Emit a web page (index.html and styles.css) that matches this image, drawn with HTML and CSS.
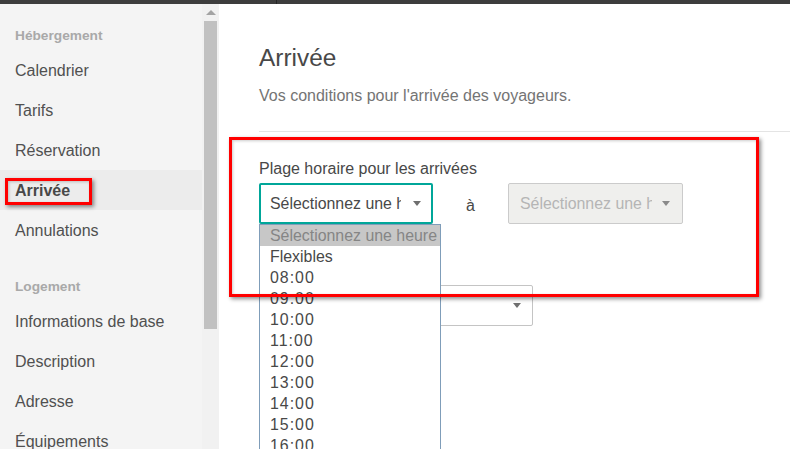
FILE: index.html
```html
<!DOCTYPE html>
<html lang="fr">
<head>
<meta charset="utf-8">
<title>Arrivée</title>
<link rel="stylesheet" href="styles.css">
</head>
<body>
<div class="topbar"><span class="topbar-divider"></span></div>
<div class="app">
  <aside class="sidebar">
    <nav class="nav">
      <div class="nav-head">Hébergement</div>
      <a class="nav-item">Calendrier</a>
      <a class="nav-item">Tarifs</a>
      <a class="nav-item">Réservation</a>
      <a class="nav-item active">Arrivée</a>
      <a class="nav-item">Annulations</a>
      <div class="nav-head second">Logement</div>
      <a class="nav-item">Informations de base</a>
      <a class="nav-item">Description</a>
      <a class="nav-item">Adresse</a>
      <a class="nav-item">Équipements</a>
    </nav>
    <div class="scrollbar">
      <div class="scroll-btn"><span class="scroll-arrow"></span></div>
      <div class="scroll-thumb"></div>
    </div>
  </aside>
  <main class="main">
    <h1 class="title">Arrivée</h1>
    <p class="subtitle">Vos conditions pour l'arrivée des voyageurs.</p>
    <hr class="rule">
    <section class="form">
      <div class="field-label">Plage horaire pour les arrivées</div>
      <div class="range">
        <div class="select focused">
          <span class="select-text">Sélectionnez une heure</span>
          <span class="caret"></span>
          <ul class="listbox">
            <li class="opt selected">Sélectionnez une heure</li>
            <li class="opt">Flexibles</li>
            <li class="opt time">08:00</li>
            <li class="opt time">09:00</li>
            <li class="opt time">10:00</li>
            <li class="opt time">11:00</li>
            <li class="opt time">12:00</li>
            <li class="opt time">13:00</li>
            <li class="opt time">14:00</li>
            <li class="opt time">15:00</li>
            <li class="opt time">16:00</li>
          </ul>
        </div>
        <span class="to">à</span>
        <div class="select disabled">
          <span class="select-text">Sélectionnez une heure</span>
          <span class="caret"></span>
        </div>
      </div>
      <div class="select wide">
        <span class="caret"></span>
      </div>
    </section>
  </main>
  <div class="annot annot-nav"></div>
  <div class="annot annot-form"></div>
</div>
</body>
</html>
```
FILE: styles.css
```css
* { box-sizing: border-box; }
html, body {
  margin: 0;
  padding: 0;
  height: 449px;
  overflow: hidden;
  background: #fff;
  font-family: "Liberation Sans", Arial, sans-serif;
  color: #484848;
}
.topbar {
  height: 4px;
  background: #3d3d3d;
}
.topbar-divider {
  display: block;
  margin-left: 276px;
  width: 1px;
  height: 4px;
  background: #262626;
}
.app {
  display: flex;
  height: 445px;
}
.sidebar {
  display: flex;
  flex: 0 0 219px;
}
.nav {
  width: 202px;
  background: #f4f4f4;
  padding-top: 22px;
}
.nav-head {
  height: 20px;
  line-height: 20px;
  padding-left: 15px;
  font-size: 13.7px;
  font-weight: bold;
  color: #a9a9a9;
  margin-bottom: 4px;
}
.nav-head.second {
  margin-top: 27px;
  margin-bottom: 4px;
}
.nav-item {
  display: block;
  height: 40px;
  padding-top: 2px;
  line-height: 38px;
  padding-left: 15px;
  font-size: 16px;
  color: #505050;
  white-space: nowrap;
}
.nav-item.active {
  background: #ececec;
  font-weight: bold;
  color: #484848;
}
.scrollbar {
  width: 17px;
  background: #f1f1f1;
  display: flex;
  flex-direction: column;
  align-items: center;
}
.scroll-btn {
  height: 17px;
  width: 17px;
  display: flex;
  align-items: center;
  justify-content: center;
}
.scroll-arrow {
  width: 0;
  height: 0;
  border-left: 5px solid transparent;
  border-right: 5px solid transparent;
  border-bottom: 5px solid #a3a3a3;
}
.scroll-thumb {
  width: 13px;
  height: 308px;
  background: #c1c1c1;
}
.main {
  flex: 1;
  padding: 39px 0 0 40px;
  position: relative;
}
.title {
  margin: 0;
  font-size: 24.4px;
  line-height: 30px;
  font-weight: normal;
  color: #484848;
}
.subtitle {
  margin: 13px 0 0;
  font-size: 16px;
  line-height: 20px;
  color: #747474;
}
.rule {
  margin: 25px 0 0;
  border: 0;
  border-top: 1px solid #e4e4e4;
  height: 0;
}
.form {
  padding-top: 27px;
}
.field-label {
  font-size: 16px;
  line-height: 20px;
  color: #484848;
}
.range {
  display: flex;
  align-items: center;
  margin-top: 4px;
}
.select {
  position: relative;
  height: 41px;
  border: 1px solid #c4c4c4;
  border-radius: 2px;
  background: #fff;
  display: flex;
  align-items: center;
  padding: 0 30px 0 10px;
  font-size: 15.9px;
  width: 175px;
}
.select-text {
  display: block;
  overflow: hidden;
  white-space: nowrap;
  width: 100%;
  line-height: 20px;
}
.caret {
  position: absolute;
  right: 11px;
  top: 17px;
  width: 0;
  height: 0;
  border-left: 4px solid transparent;
  border-right: 4px solid transparent;
  border-top: 5px solid #6f6f6f;
}
.select.focused {
  width: 174px;
  border: 2px solid #00a699;
  padding-left: 9px;
  padding-right: 30px;
}
.select.focused .caret {
  right: 10px;
  top: 16px;
}
.select.disabled {
  background: #efefed;
  border-color: #cbcbcb;
  color: #b5b5b5;
  padding-left: 11px;
  padding-right: 30px;
}
.select.disabled .caret {
  border-top-color: #8a8a8a;
  right: 12px;
}
.select.wide {
  width: 274px;
  margin-top: 61px;
}
.to {
  width: 75px;
  text-align: center;
  font-size: 16px;
  padding-top: 4px;
}
.listbox {
  position: absolute;
  left: -2px;
  top: 39px;
  width: 182px;
  margin: 0;
  padding: 0;
  list-style: none;
  background: #fff;
  border: 1px solid #7f9db9;
  z-index: 5;
}
.opt {
  height: 21px;
  line-height: 21px;
  padding-left: 10px;
  font-size: 15.9px;
  color: #484848;
  white-space: nowrap;
  overflow: hidden;
}
.opt.time {
  letter-spacing: 1px;
}
.opt.selected {
  background: #c7c7c7;
  color: #858585;
}
.annot {
  position: absolute;
  border: 3px solid #ff0000;
  box-shadow: 2px 2px 4px rgba(0, 0, 0, 0.45), inset 1px 1px 3px rgba(0, 0, 0, 0.2);
  z-index: 10;
  pointer-events: none;
}
.annot-nav {
  left: 5px;
  top: 178px;
  width: 87px;
  height: 27px;
}
.annot-form {
  left: 229px;
  top: 137px;
  width: 530px;
  height: 160px;
}
```
